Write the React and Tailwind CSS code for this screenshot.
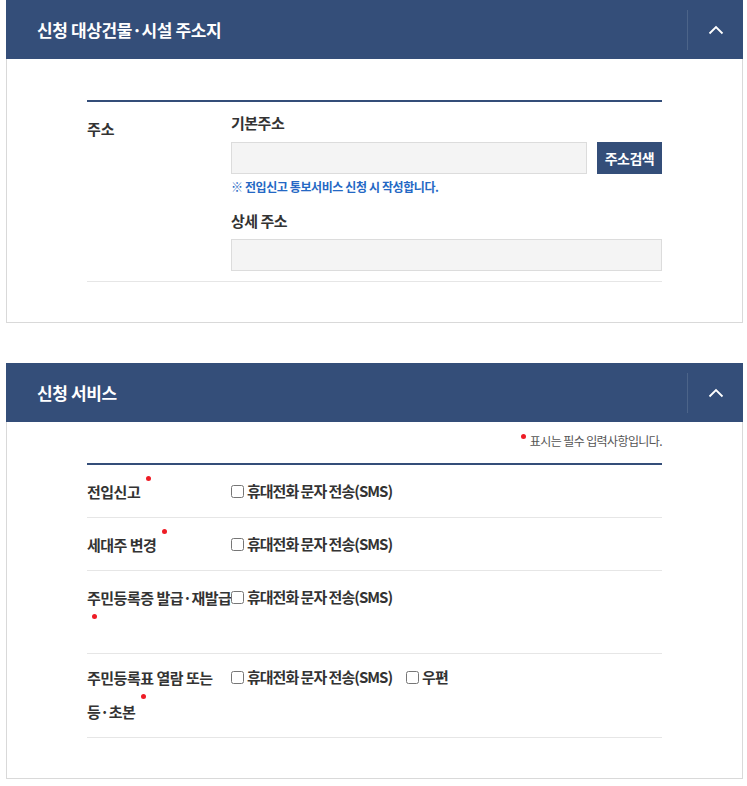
import React from "react";

const font = { fontFamily: '"Noto Sans CJK KR", "Noto Sans", sans-serif' };

function ChevronUp() {
  return (
    <svg width="16" height="10" viewBox="0 0 16 10" fill="none">
      <path d="M1.5 8.5 L8 2 L14.5 8.5" stroke="white" strokeWidth="1.8" />
    </svg>
  );
}

function PanelHeader({ title }) {
  return (
    <div className="flex items-center h-[59px] bg-[#344e79]">
      <h2 className="flex-1 pl-[31px] text-[17px] font-bold text-white tracking-[-0.4px] leading-none">
        {title}
      </h2>
      <div className="h-[40px] w-px bg-[#4c6489]" />
      <button className="w-[55px] h-[59px] flex items-center justify-center">
        <ChevronUp />
      </button>
    </div>
  );
}

function Dot({ className = "mt-[1px]" }) {
  return (
    <span className={`inline-block w-[5px] h-[5px] rounded-full bg-[#ee1c25] ml-[6px] align-top ${className}`} />
  );
}

function Check({ label }) {
  return (
    <label className="inline-flex items-center gap-[2px] text-[15px] font-bold text-[#333] tracking-[-1px]">
      <input type="checkbox" className="w-[13px] h-[13px] m-0 mr-[1px]" />
      <span>{label}</span>
    </label>
  );
}

function ServiceRow({ children, options, last, pad = "pt-[10px] pb-[8px]" }) {
  return (
    <div className={`flex ${pad} ${last ? "" : "border-b border-[#e6e6e6]"}`}>
      <div className="w-[144px] text-[15px] font-bold text-[#333] leading-[34px] tracking-[-0.5px]">
        {children}
      </div>
      <div className="flex-1 flex items-start gap-[14px] leading-[32px]">
        {options.map((o) => (
          <Check key={o} label={o} />
        ))}
      </div>
    </div>
  );
}

export default function App() {
  const sms = "휴대전화 문자 전송(SMS)";
  return (
    <div className="bg-white min-h-[786px] pl-[6px] pr-[4px]" style={font}>
      {/* 주소지 */}
      <section>
        <PanelHeader title="신청 대상건물·시설 주소지" />
        <div className="border border-t-0 border-[#d9d9d9] px-[80px] pt-[41px] pb-[40px]">
          <div className="border-t-2 border-[#344e79] flex pt-[10px] pb-[10px] border-b border-b-[#e6e6e6]">
            <div className="w-[144px] pt-[6px] text-[15px] font-bold text-[#333] leading-[22px]">
              주소
            </div>
            <div className="flex-1">
              <div className="text-[15px] font-bold text-[#333] leading-[22px] tracking-[-0.5px]">
                기본주소
              </div>
              <div className="flex gap-[10px] mt-[8px]">
                <input
                  type="text"
                  className="flex-1 h-[32px] bg-[#f4f4f4] border border-[#dcdcdc] outline-none"
                />
                <button className="w-[65px] h-[32px] bg-[#344e79] text-white text-[14px] font-bold tracking-[-0.5px]">
                  주소검색
                </button>
              </div>
              <p className="mt-[4px] text-[12px] font-bold text-[#2468c4] leading-[18px] tracking-[-0.4px]">
                ※ 전입신고 통보서비스 신청 시 작성합니다.
              </p>
              <div className="mt-[14px] text-[15px] font-bold text-[#333] leading-[22px] tracking-[-0.5px]">
                상세 주소
              </div>
              <input
                type="text"
                className="mt-[7px] w-full h-[32px] bg-[#f4f4f4] border border-[#dcdcdc] outline-none"
              />
            </div>
          </div>
        </div>
      </section>

      {/* 신청 서비스 */}
      <section className="mt-[40px]">
        <PanelHeader title="신청 서비스" />
        <div className="border border-t-0 border-[#d9d9d9] px-[80px] pt-[9px] pb-[40px]">
          <p className="text-right text-[12px] text-[#555] leading-[20px] tracking-[-0.6px] mb-[12px]">
            <span className="inline-block w-[5px] h-[5px] rounded-full bg-[#ee1c25] mr-[4px] align-top mt-[3px]" />
            표시는 필수 입력사항입니다.
          </p>
          <div className="border-t-2 border-[#344e79]">
            <ServiceRow options={[sms]}>
              전입신고<Dot />
            </ServiceRow>
            <ServiceRow options={[sms]}>
              세대주 변경<Dot />
            </ServiceRow>
            <ServiceRow options={[sms]}>
              <div className="whitespace-nowrap">주민등록증 발급·재발급</div>
              <div className="h-[30px] leading-none">
                <span className="inline-block w-[5px] h-[5px] rounded-full bg-[#ee1c25] ml-[5px] mt-[-1px] align-top" />
              </div>
            </ServiceRow>
            <ServiceRow options={[sms, "우편"]} pad="pt-[7px] pb-[8px]">
              주민등록표 열람 또는
              <br />
              등·초본<Dot className="mt-[-1px]" />
            </ServiceRow>
          </div>
        </div>
      </section>
    </div>
  );
}
